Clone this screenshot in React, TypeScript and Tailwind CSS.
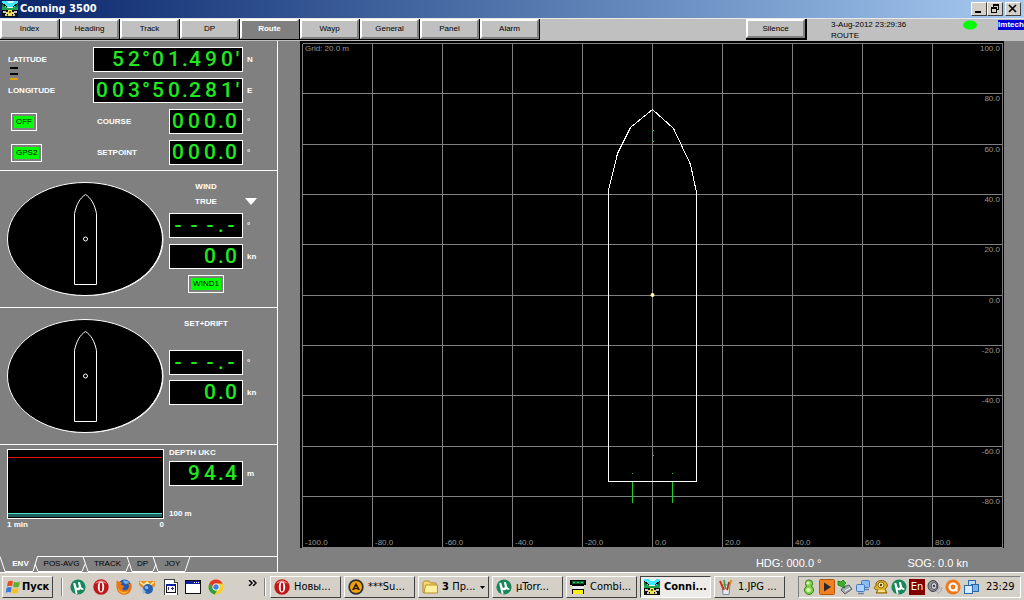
import React, { useState } from "react";
import clsx from "clsx";

const PAGES = ["Index", "Heading", "Track", "DP", "Route", "Wayp", "General", "Panel", "Alarm"];

const TABS = [
  { name: "ENV", width: "w-[37px] pl-1" },
  { name: "POS-AVG", width: "w-[49px]" },
  { name: "TRACK", width: "w-[43px]" },
  { name: "DP", width: "w-[27px]" },
  { name: "JOY", width: "w-[33px]" },
];

/* ---------- Icons ---------- */

function ConningIcon() {
  return (
    <svg viewBox="0 0 16 16" className="w-4 h-4 shrink-0" shapeRendering="crispEdges">
      <rect width="16" height="16" fill="#101010" />
      <rect width="16" height="7" fill="#40e8ff" />
      <path d="M0 3l4 3H0zM16 3l-4 3h4z" fill="#107838" />
      <path d="M0 2l5 4M16 2l-5 4" stroke="#000" />
      <path d="M4 0h8l-2 2H6z" fill="#d8ffff" />
      <rect y="6" width="16" height="3" fill="#20a050" />
      <path d="M5 6h6v1H5z" fill="#e8f8e8" />
      <path d="M1 10h3v2H1zM12 10h3v2h-3zM3 13h2v2H3zM11 13h2v2h-2z" fill="#c8c8c8" />
      <path d="M6 9h4v2h2v2h-2v2H6v-2H4v-2h2z" fill="#f0e060" />
      <path d="M7 10h2v2H7zM5 14h1v1H5zM10 14h1v1h-1z" fill="#806000" />
    </svg>
  );
}

function UtorrentIcon() {
  return (
    <svg viewBox="0 0 16 16" className="w-4 h-4 shrink-0">
      <circle cx="8" cy="8" r="7.6" fill="#16875a" />
      <path d="M3.2 4.3l2-.6 1.3 4.4c.4 1.4 2.6 1 2.3-.6L7.9 3.3l2-.4 1.4 5.2c.3.9.9 1.1 1.8.8l.5 1.6c-1.5.6-2.6.3-3.2-.6-1 1.5-2.7 1.8-3.8.8l1 3.8-1.8.9z" fill="#fff" />
    </svg>
  );
}

function OperaIcon() {
  return (
    <svg viewBox="0 0 16 16" className="w-4 h-4 shrink-0">
      <circle cx="8" cy="8" r="7.7" fill="#c01818" />
      <path d="M2 5a7 7 0 0 1 12 0c-3-2-9-2-12 0z" fill="#f08080" />
      <ellipse cx="8" cy="8" rx="3.2" ry="5.5" fill="#fff" />
      <ellipse cx="8" cy="8" rx="1.3" ry="4.5" fill="#b01010" />
    </svg>
  );
}

function FirefoxIcon() {
  return (
    <svg viewBox="0 0 16 16" className="w-4 h-4 shrink-0">
      <circle cx="8.5" cy="7" r="6.5" fill="#2858a8" />
      <path d="M7 2c2-1 5 0 6 2l-3 1-2-1z" fill="#78b8e8" />
      <path d="M1 1c1 1.5 2 2 4 2 1 0 1 2-.5 2.5 2 .5 3.5 1 3.5 2.5C7 9 6 9 6.5 10.5c2 1.5 5 1 6-1.5 1-2 0-3.5-.5-4.5C15 6 15.5 3 14.5 2.5 17 7 16 15.5 8 15.7 .5 15.5 -.8 7 1 1z" fill="#e87818" />
      <path d="M1.5 8c1 4 6 6.5 11 4-2 4-10 3.5-11-4z" fill="#f8b830" />
    </svg>
  );
}

function MailClientIcon() {
  return (
    <svg viewBox="0 0 16 16" className="w-4 h-4 shrink-0">
      <path d="M0 2h16v5l-3 2H3L0 6z" fill="#e89020" />
      <path d="M1 3l4 3 3-3 3 3 4-3" stroke="#fff0b0" strokeWidth="1.4" fill="none" />
      <circle cx="9" cy="10" r="5" fill="#2860b0" />
      <circle cx="7.5" cy="8.5" r="1.8" fill="#80b8f0" />
      <path d="M3 8l4 5-3 2z" fill="#98b8d8" />
    </svg>
  );
}

function DocumentIcon() {
  return (
    <svg viewBox="0 0 16 16" className="w-4 h-4 shrink-0" shapeRendering="crispEdges">
      <path d="M2 0h10l3 3v13H2z" fill="#fff" stroke="#404040" />
      <path d="M12 0v3h3" fill="#ccc" stroke="#404040" />
      <rect x="4" y="5" width="9" height="8" fill="#fff" stroke="#101010" />
      <path d="M4 5h9v2H4z" fill="#1020a0" />
      <path d="M6 8h1v3H6zM9 9h3v1H9zM10 8h1v3h-1z" fill="#303080" />
    </svg>
  );
}

function WindowIcon() {
  return (
    <svg viewBox="0 0 16 16" className="w-4 h-4 shrink-0" shapeRendering="crispEdges">
      <rect x="0" y="1" width="16" height="14" fill="#101010" />
      <rect x="1" y="2" width="14" height="12" fill="#fff" />
      <rect x="1" y="2" width="14" height="3" fill="#1020a0" />
      <path d="M9 3h1v1H9zM11 3h1v1h-1zM13 3h1v1h-1z" fill="#fff" />
    </svg>
  );
}

function ChromeIcon() {
  return (
    <svg viewBox="0 0 16 16" className="w-4 h-4 shrink-0">
      <circle cx="8" cy="8" r="7.5" fill="#f8d030" />
      <path d="M1.5 4.3A7.5 7.5 0 0 1 14.6 4.5H8A3.5 3.5 0 0 0 4.7 9z" fill="#e03828" />
      <path d="M1.5 4.3L5 9.8a3.5 3.5 0 0 0 4 1.6l-2.2 4A7.5 7.5 0 0 1 1.5 4.3z" fill="#30a048" />
      <circle cx="8" cy="8" r="3.5" fill="#fff" />
      <circle cx="8" cy="8" r="2.7" fill="#4080e0" />
    </svg>
  );
}

function AimpIcon() {
  return (
    <svg viewBox="0 0 16 16" className="w-4 h-4 shrink-0">
      <circle cx="8" cy="8" r="7.7" fill="#303030" />
      <circle cx="8" cy="8" r="6" fill="#f0a010" />
      <path d="M8 3.5L4 11h2l2-4 2 4h2z" fill="#302000" />
      <path d="M6 9h4v1.2H6z" fill="#302000" />
    </svg>
  );
}

function FolderIcon() {
  return (
    <svg viewBox="0 0 16 16" className="w-4 h-4 shrink-0">
      <path d="M1 3.5L2.5 2H7l1.5 2H14v9.5H1z" fill="#f8d868" stroke="#b08820" />
      <path d="M3.5 6H15.5V14H2z" fill="#fff0a0" stroke="#b89028" />
    </svg>
  );
}

function CombiIcon() {
  return (
    <svg viewBox="0 0 16 16" className="w-4 h-4 shrink-0" shapeRendering="crispEdges">
      <path d="M0 1h16v5h-2v9H2V6H0z" fill="#000" />
      <path d="M2 2h12v3H2z" fill="#106030" />
      <path d="M3 3h2v1H3zM7 3h2v1H7zM11 3h2v1h-2z" fill="#30d060" />
      <path d="M2 7h12v3H2z" fill="#e8e8e8" />
      <path d="M3 11h10v4H3z" fill="#f8f010" />
    </svg>
  );
}

function PaintIcon() {
  return (
    <svg viewBox="0 0 16 16" className="w-4 h-4 shrink-0">
      <path d="M4 6h8l-1 9.5H5z" fill="#e8e8f0" stroke="#808898" />
      <path d="M2 2l4 9" stroke="#d83020" strokeWidth="2" />
      <path d="M6 1l1.5 9" stroke="#30a040" strokeWidth="1.6" />
      <path d="M13.5 1L9 11" stroke="#d89020" strokeWidth="2" />
      <path d="M11 3l-2 8" stroke="#a03030" strokeWidth="1.5" />
    </svg>
  );
}

function WindowsFlag() {
  return (
    <svg viewBox="0 0 16 16" className="w-4 h-4 shrink-0">
      <path d="M3 2.5C5 1.3 6.5 1.5 8 2.3L7 7.3C5.5 6.5 4 6.5 2 7.5z" fill="#e85020" />
      <path d="M9 2.7c2 1 3.5.8 6-.2l-1 5c-2 1-4 1.2-6 .2z" fill="#60b030" />
      <path d="M1.7 8.7c2-1 3.5-.8 5-.1l-1 5c-1.5-.8-3-.8-5 .1z" fill="#3878d8" />
      <path d="M7.7 9c2 1 4 .8 6-.2l-1 5c-2 1-4 1-6 0z" fill="#f8c020" />
    </svg>
  );
}

function TrayIcons() {
  return (
    <>
      {/* messenger */}
      <svg viewBox="0 0 16 16" className="w-4 h-4 shrink-0">
        <circle cx="8" cy="11" r="4.5" fill="#80d048" stroke="#388018" />
        <circle cx="8" cy="4.5" r="3.6" fill="#80d048" stroke="#388018" />
        <path d="M6 7h4v2H6z" fill="#80d048" />
        <circle cx="7" cy="4" r="1.6" fill="#e0ffc0" />
        <ellipse cx="7.5" cy="11" rx="2.5" ry="2" fill="#d0f8a8" />
      </svg>
      {/* player */}
      <svg viewBox="0 0 16 16" className="w-4 h-4 shrink-0">
        <rect x=".5" y=".5" width="15" height="15" rx="1" fill="#f08020" stroke="#b05808" />
        <path d="M5 3.5l7 4.5-7 4.5z" fill="#282828" />
      </svg>
      {/* safe removal */}
      <svg viewBox="0 0 16 16" className="w-4 h-4 shrink-0">
        <path d="M6 8l6-2 3 4-7 5-4-4z" fill="#a0a8b0" stroke="#586068" />
        <path d="M1 2l3 1 2-2 3 3-2 2 1 3-7-3z" fill="#38b028" stroke="#187010" strokeWidth=".7" />
        <path d="M8 12l5-3" stroke="#fff" />
      </svg>
      {/* network */}
      <svg viewBox="0 0 16 16" className="w-4 h-4 shrink-0">
        <rect x="6.5" y="1.5" width="8" height="7" rx="1" fill="#88bcf8" stroke="#4878c0" />
        <rect x="1.5" y="5.5" width="8" height="7" rx="1" fill="#a8d4ff" stroke="#4878c0" />
        <path d="M3 14.5h6M10 10.5h4" stroke="#6080a8" strokeWidth="1.5" />
      </svg>
      {/* yellow agent */}
      <svg viewBox="0 0 16 16" className="w-4 h-4 shrink-0">
        <path d="M3 4c3-4 10-3 11 1 1 3-1 4-2 5l2 4H3l2-3C1 11 0 8 3 7z" fill="#e0b028" stroke="#886008" />
        <circle cx="8" cy="6" r="3" fill="#fff0a0" stroke="#906810" />
        <circle cx="8" cy="6" r="1.2" fill="#504010" />
        <path d="M5 12h7" stroke="#fff0a0" strokeWidth="1.5" />
      </svg>
      <UtorrentIcon />
      <span className="w-4 h-4 shrink-0 bg-[#800000] text-white text-[11px] leading-4 text-center">En</span>
      {/* volume */}
      <svg viewBox="0 0 16 16" className="w-4 h-4 shrink-0">
        <ellipse cx="6" cy="7" rx="5" ry="5.5" fill="#909098" stroke="#404048" />
        <ellipse cx="7" cy="7" rx="2.8" ry="3.5" fill="#d8d8e0" stroke="#505058" />
        <circle cx="7" cy="7" r="1.2" fill="#404048" />
        <path d="M12 7c1 3-1 5-3 6M14.5 8c.5 3-1.5 5.5-4 6.5" stroke="#a0a0b0" fill="none" />
      </svg>
      {/* antivirus */}
      <svg viewBox="0 0 16 16" className="w-4 h-4 shrink-0">
        <circle cx="8" cy="8" r="7.6" fill="#f07818" />
        <circle cx="8" cy="8" r="3.5" fill="none" stroke="#fff" strokeWidth="2.2" />
        <path d="M11.5 6v6.5" stroke="#fff" strokeWidth="2" />
      </svg>
      {/* virtual machine */}
      <svg viewBox="0 0 16 16" className="w-4 h-4 shrink-0">
        <rect x="5.5" y="1.5" width="7" height="7" fill="#b8dcf8" stroke="#2868a8" />
        <rect x="8.5" y="5.5" width="7" height="7" fill="#78b4e8" stroke="#2868a8" />
        <rect x="1.5" y="6.5" width="8" height="8" fill="#d8ecff" stroke="#2868a8" />
      </svg>
    </>
  );
}

const QUICK_LAUNCH = [
  { name: "uTorrent", icon: <UtorrentIcon /> },
  { name: "Opera", icon: <OperaIcon /> },
  { name: "Firefox", icon: <FirefoxIcon /> },
  { name: "Mail", icon: <MailClientIcon /> },
  { name: "Document", icon: <DocumentIcon /> },
  { name: "Window", icon: <WindowIcon /> },
  { name: "Chrome", icon: <ChromeIcon /> },
];

const TASKS = [
  { label: "Новы...", icon: <OperaIcon /> },
  { label: "***Su...", icon: <AimpIcon /> },
  { label: "Пр...", count: 3, icon: <FolderIcon /> },
  { label: "µTorr...", icon: <UtorrentIcon /> },
  { label: "Combi...", icon: <CombiIcon /> },
  { label: "Conni...", icon: <ConningIcon />, active: true },
  { label: "1.JPG ...", icon: <PaintIcon /> },
];

/* ---------- Panel parts ---------- */

function Readout({ value, wide }: { value: string; wide?: boolean }) {
  return (
    <div
      className={clsx(
        "h-[25px] shrink-0 bg-black border border-white text-right whitespace-nowrap font-['Roboto',sans-serif] font-medium text-[21px] leading-[23px] text-[#20e820]",
        wide ? "w-[150px] pr-[2px]" : "w-[74px] pr-[3px]"
      )}
    >
      {value.split("").map((ch, i) => (
        <span
          key={i}
          className={clsx("inline-block text-center", /[.']/.test(ch) ? "w-[5px]" : ch === "°" ? "w-2" : "w-4")}
        >
          {ch}
        </span>
      ))}
    </div>
  );
}

function Unit({ children }: { children: React.ReactNode }) {
  return <span className="w-[34px] shrink-0 pl-1 font-bold">{children}</span>;
}

function SourceButton({ children }: { children: React.ReactNode }) {
  return (
    <button className="h-[18px] border border-white p-[2px] leading-3 text-black">
      <span className="block bg-[#00ff00] px-[2px]">{children}</span>
    </button>
  );
}

function ShipDial() {
  return (
    <svg viewBox="0 0 157 115" className="w-[157px] h-[115px] shrink-0 mt-[11px]">
      <ellipse cx="79" cy="57.5" rx="77.5" ry="56.5" fill="#fff" />
      <ellipse cx="78" cy="57" rx="77.5" ry="56.5" fill="#000" stroke="#fff" />
      <path d="M67.5 102.5V31.5C69.5 22 73 16 78.5 12.5C84 16 87.5 22 89.5 31.5V102.5Z" fill="none" stroke="#fff" />
      <circle cx="78.5" cy="57" r="2" fill="none" stroke="#fff" />
    </svg>
  );
}

function GridPlot() {
  const steps = Array.from({ length: 11 }, (_, i) => i);
  const rowY = (i: number) => 2.5 + Math.round(i * 50.35);
  return (
    <svg viewBox="0 0 704 507" className="block w-full bg-black font-['Liberation_Sans',sans-serif]">
      <g stroke="#808080" shapeRendering="crispEdges">
        {steps.map((i) => (
          <line key={`v${i}`} x1={2.5 + i * 70} x2={2.5 + i * 70} y1="2.5" y2="507" />
        ))}
        {steps.map((i) => (
          <line key={`h${i}`} x1="2.5" x2="702.5" y1={rowY(i)} y2={rowY(i)} />
        ))}
      </g>
      <g fill="#999999" fontSize="8">
        <text x="5" y="10">Grid: 20.0 m</text>
        {steps.slice(0, 10).map((i) => (
          <text key={`y${i}`} x="700" y={10 + Math.round(i * 50.35)} textAnchor="end">
            {(100 - i * 20).toFixed(1)}
          </text>
        ))}
        {steps.slice(0, 10).map((i) => (
          <text key={`x${i}`} x={5 + i * 70} y="504">
            {(i * 20 - 100).toFixed(1)}
          </text>
        ))}
      </g>
      {/* hull outline */}
      <path
        d="M308.5 440.5V149.5L317.5 112.5L330.5 86.5L352.5 68.5L373.5 87.5L390.5 123.5L396.5 151.5V440.5Z"
        fill="none"
        stroke="#fff"
        shapeRendering="crispEdges"
      />
      {/* thrusters */}
      <g fill="#20d020" shapeRendering="crispEdges">
        <path d="M332 441h1v21h-1zM372 441h1v21h-1z" />
        <path d="M352 89h2v1h-2zM352 100h2v1h-2zM353 405h1v1h-1zM353 414h1v1h-1zM332 432h1v1h-1zM372 432h1v1h-1z" />
      </g>
      <circle cx="352.5" cy="254" r="2" fill="#ffffb0" />
    </svg>
  );
}

export default function App() {
  const [page, setPage] = useState("Route");
  const [tab, setTab] = useState("ENV");

  return (
    <div className="min-h-screen flex flex-col bg-[#808080] font-['Liberation_Sans',sans-serif] text-[8px] text-white overflow-hidden">
      {/* Title bar */}
      <header className="h-[18px] shrink-0 flex items-center gap-[2px] pl-[2px] pr-[3px] bg-gradient-to-r from-[#0a246a] to-[#a6caf0]">
        <ConningIcon />
        <h1 className="font-['DejaVu_Sans_Condensed','DejaVu_Sans',sans-serif] font-bold text-[11px] leading-4">Conning 3500</h1>
        <div className="ml-auto flex text-black">
          <button aria-label="Minimize" className="w-4 h-[14px] bg-[#d4d0c8] border border-t-white border-l-white border-r-[#404040] border-b-[#404040]">
            <svg viewBox="0 0 14 12" className="block w-[14px] h-3"><path d="M3 8h6v2H3z" /></svg>
          </button>
          <button aria-label="Restore" className="w-4 h-[14px] bg-[#d4d0c8] border border-t-white border-l-white border-r-[#404040] border-b-[#404040]">
            <svg viewBox="0 0 14 12" className="block w-[14px] h-3" shapeRendering="crispEdges">
              <path d="M5 1h6v2H5zM5 3h1v1H5zM10 3h1v4h-1zM9 6h1v1H9zM3 4h6v2H3zM3 6h1v4H3zM8 6h1v4H8zM4 9h4v1H4z" />
            </svg>
          </button>
          <button aria-label="Close" className="w-4 h-[14px] ml-[2px] bg-[#d4d0c8] border border-t-white border-l-white border-r-[#404040] border-b-[#404040]">
            <svg viewBox="0 0 14 12" className="block w-[14px] h-3"><path d="M3 2l7 7M10 2l-7 7" stroke="#000" strokeWidth="1.6" /></svg>
          </button>
        </div>
      </header>

      {/* Toolbar */}
      <div className="h-[23px] shrink-0 flex items-start bg-[#c0c0c0] border-t border-t-[#e8e8e8] text-black">
        <nav className="flex">
          {PAGES.map((name) => (
            <button
              key={name}
              onClick={() => setPage(name)}
              className="w-[60px] h-[21px] border-r border-b border-black"
            >
              <span
                className={clsx(
                  "block h-5 leading-4 border-2 border-t-white border-l-white border-r-[#808080] border-b-[#808080]",
                  page === name ? "bg-[#808080] text-white font-bold" : "bg-[#c0c0c0]"
                )}
              >
                {name}
              </span>
            </button>
          ))}
        </nav>
        <div className="ml-auto w-[278px] flex items-start">
          <button className="w-[61px] h-[21px] border-r-2 border-b-2 border-black">
            <span className="block h-[19px] leading-[15px] border-2 border-t-white border-l-white border-r-[#808080] border-b-[#808080]">Silence</span>
          </button>
          <div className="ml-6 leading-[11px]">
            <p>3-Aug-2012 23:29:36</p>
            <p>ROUTE</p>
          </div>
          <svg viewBox="0 0 14 10" className="w-[14px] h-[10px] mt-px ml-auto mr-[21px]"><ellipse cx="7" cy="5" rx="7" ry="4.5" fill="#00ff00" /></svg>
          <span className="w-[26px] mt-px bg-[#0000d8] text-white font-bold leading-[10px] text-center">Imtech</span>
        </div>
      </div>

      <main className="flex-1 flex">
        {/* Environment panel */}
        <aside className="w-[278px] shrink-0 flex flex-col border-r border-white">
          <section className="relative h-[130px] shrink-0 pt-[6px] flex flex-col gap-[6px] border-b border-white">
            <div className="flex items-center pl-2">
              <span className="font-bold">LATITUDE</span>
              <span className="ml-auto"><Readout value="52°01.490'" wide /></span>
              <Unit>N</Unit>
            </div>
            <div className="flex items-center pl-2">
              <span className="font-bold">LONGITUDE</span>
              <span className="ml-auto"><Readout value="003°50.281'" wide /></span>
              <Unit>E</Unit>
            </div>
            <div className="flex items-center pl-[11px]">
              <span className="w-[86px]"><SourceButton>OFF</SourceButton></span>
              <span className="font-bold">COURSE</span>
              <span className="ml-auto"><Readout value="000.0" /></span>
              <Unit>°</Unit>
            </div>
            <div className="flex items-center pl-[11px]">
              <span className="w-[86px]"><SourceButton>GPS2</SourceButton></span>
              <span className="font-bold">SETPOINT</span>
              <span className="ml-auto"><Readout value="000.0" /></span>
              <Unit>°</Unit>
            </div>
            <svg viewBox="0 0 8 13" className="absolute left-[10px] top-[26px] w-2 h-[13px]" shapeRendering="crispEdges">
              <path d="M0 0h8v2H0zM0 6h8v2H0z" fill="#000" />
              <path d="M0 11h8v2H0z" fill="#e0a010" />
            </svg>
          </section>

          <section className="h-[137px] shrink-0 pl-[7px] flex gap-[5px] border-b border-white">
            <ShipDial />
            <div className="flex-1 pt-2">
              <h2 className="w-[74px] text-center font-bold leading-[15px]">WIND</h2>
              <button className="flex items-center leading-[15px]">
                <span className="w-[74px] text-center font-bold">TRUE</span>
                <svg viewBox="0 0 12 7" className="w-3 h-[7px] ml-[2px]"><path d="M0 0h12L6 7z" fill="#fff" /></svg>
              </button>
              <div className="mt-1 flex items-center"><Readout value="---.-" /><Unit>°</Unit></div>
              <div className="mt-[6px] flex items-center"><Readout value="0.0" /><Unit>kn</Unit></div>
              <div className="mt-[6px] w-[74px] flex justify-center"><SourceButton>WIND1</SourceButton></div>
            </div>
          </section>

          <section className="h-[137px] shrink-0 pl-[7px] flex gap-[5px] border-b border-white">
            <ShipDial />
            <div className="flex-1 pt-2">
              <h2 className="w-[74px] h-[30px] text-center font-bold leading-[15px]">SET+DRIFT</h2>
              <div className="mt-1 flex items-center"><Readout value="---.-" /><Unit>°</Unit></div>
              <div className="mt-[5px] flex items-center"><Readout value="0.0" /><Unit>kn</Unit></div>
            </div>
          </section>

          <section className="flex-1 pl-[7px] flex gap-[5px] font-bold">
            <div className="w-[157px] pt-1">
              <svg viewBox="0 0 157 70" className="block w-full h-[70px]" shapeRendering="crispEdges">
                <rect x=".5" y=".5" width="156" height="69" fill="#000" stroke="#fff" />
                <path d="M1 8h154v1H1z" fill="#e81010" />
                <path d="M1 65h154v3H1z" fill="#206060" />
                <path d="M1 64h154v1H1z" fill="#50e0d0" />
              </svg>
              <div className="flex justify-between leading-[11px]">
                <span>1 min</span>
                <span>0</span>
              </div>
            </div>
            <div>
              <h2 className="leading-[15px]">DEPTH UKC</h2>
              <div className="mt-px flex items-center"><Readout value="94.4" /><Unit>m</Unit></div>
              <p className="mt-[22px] leading-3">100 m</p>
            </div>
          </section>

          <div className="relative h-4 shrink-0 flex text-black">
            <svg viewBox="0 0 277 16" className="absolute inset-0 w-full h-4" fill="none" stroke="#fff">
              <path d="M0 .5L5 15.5H33L37.5.5H277" />
              <path d="M35 8L38 15.5H82L85 8M83 .5L88 15.5H126L129 8M127 .5L132 15.5H153L156 8M153 .5L158 15.5H185L190 .5" />
            </svg>
            {TABS.map((t) => (
              <button
                key={t.name}
                onClick={() => setTab(t.name)}
                className={clsx("relative text-center leading-[14px]", t.width, tab === t.name && "text-white font-bold")}
              >
                {t.name}
              </button>
            ))}
          </div>
        </aside>

        {/* Position plot */}
        <div className="flex-1 pl-[22px] pr-5">
          <GridPlot />
          <div className="flex justify-end gap-[86px] pr-9 pt-[7px] text-[11px] leading-4">
            <span>HDG: 000.0 °</span>
            <span>SOG: 0.0 kn</span>
          </div>
        </div>
      </main>

      {/* Taskbar */}
      <footer className="h-7 shrink-0 flex items-center pt-px pl-[2px] pr-[3px] bg-[#d4d0c8] border-t border-white text-black font-['DejaVu_Sans_Condensed','DejaVu_Sans',sans-serif] text-[11px]">
        <button className="w-[51px] h-[22px] shrink-0 flex items-center gap-px pl-[2px] font-bold border border-t-white border-l-white border-r-[#404040] border-b-[#404040]">
          <WindowsFlag />
          Пуск
        </button>
        <span className="w-[2px] h-[18px] ml-2 bg-[#808080] border-r border-white" />
        <div className="flex gap-[7px] ml-[7px]">
          {QUICK_LAUNCH.map((q) => (
            <button key={q.name} aria-label={q.name}>{q.icon}</button>
          ))}
        </div>
        <button aria-label="More" className="ml-6 mb-2">
          <svg viewBox="0 0 9 6" className="block w-[9px] h-[6px]"><path d="M1 0l3 3-3 3M5 0l3 3-3 3" fill="none" stroke="#000" strokeWidth="1.5" /></svg>
        </button>
        <span className="w-[2px] h-[18px] ml-[7px] mr-1 bg-[#808080] border-r border-white" />
        <div className="flex gap-[3px]">
          {TASKS.map((task) => (
            <button
              key={task.label}
              className={clsx(
                "w-[71px] h-[22px] flex items-center gap-1 pl-[3px] whitespace-nowrap border",
                task.active
                  ? "bg-[#eeece8] font-bold border-t-[#404040] border-l-[#404040] border-r-white border-b-white"
                  : "border-t-white border-l-white border-r-[#404040] border-b-[#404040]"
              )}
            >
              {task.icon}
              <span>
                {task.count && <b>{task.count} </b>}
                {task.label}
              </span>
              {task.count && (
                <svg viewBox="0 0 5 3" className="w-[5px] h-[3px]"><path d="M0 0h5L2.5 3z" /></svg>
              )}
            </button>
          ))}
        </div>
        <div className="ml-auto w-[223px] h-[22px] flex items-center gap-[2px] pl-[2px] border border-t-[#808080] border-l-[#808080] border-r-white border-b-white">
          <TrayIcons />
          <time className="ml-[5px]">23:29</time>
        </div>
      </footer>
    </div>
  );
}
